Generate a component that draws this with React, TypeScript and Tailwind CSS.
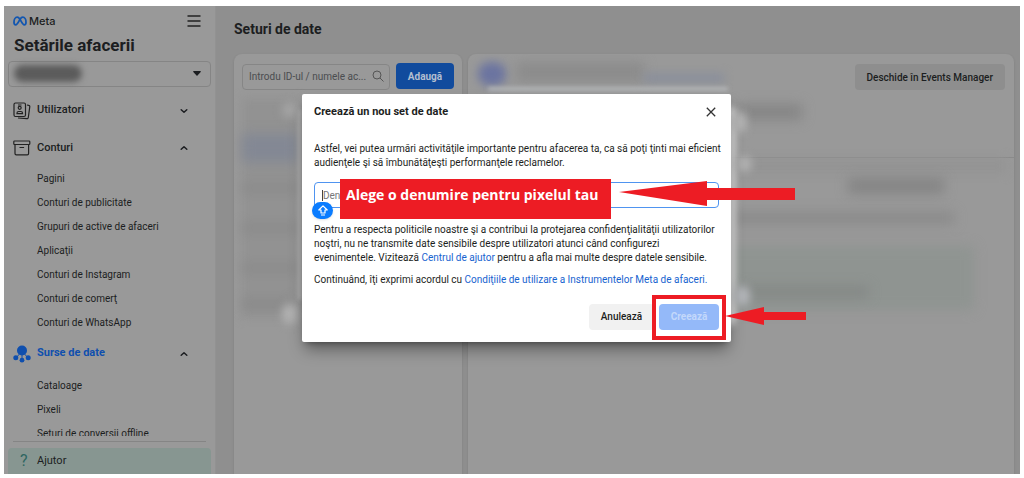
const conturi = [
  "Pagini",
  "Conturi de publicitate",
  "Grupuri de active de afaceri",
  "Aplicaţii",
  "Conturi de Instagram",
  "Conturi de comerţ",
  "Conturi de WhatsApp",
];

const surse = ["Cataloage", "Pixeli", "Seturi de conversii offline"];

function MetaLogo() {
  return (
    <svg
      className="w-[14px] h-[10px]"
      viewBox="0 0 14 10"
      fill="none"
      stroke="#1256b0"
      strokeWidth="1.8"
      strokeLinecap="round"
    >
      <path d="M7 3.200C6 1.900 5.200 1.200 4.200 1.200 2.300 1.200 1 3.800 1 6.300c0 1.500.6 2.500 1.700 2.500C4.300 8.800 5.400 6 7 3.200 8 1.700 8.900 1.200 9.800 1.200c1.900 0 3.200 2.600 3.200 5.100 0 1.500-.6 2.500-1.700 2.500C9.700 8.800 8.600 6 7 3.200z" />
    </svg>
  );
}

function Chevron({ open }: { open?: boolean }) {
  return (
    <svg
      className="w-2 h-2"
      viewBox="0 0 8 8"
      fill="none"
      stroke="#1c1e21"
      strokeWidth="1.5"
      strokeLinecap="round"
      strokeLinejoin="round"
    >
      <path d={open ? "M1.2 5.300 4 2.700 6.800 5.300" : "M1.2 2.700 4 5.300 6.800 2.700"} />
    </svg>
  );
}

function UsersIcon() {
  return (
    <svg className="w-[18px] h-[18px]" viewBox="0 0 18 18" fill="none" stroke="#222" strokeWidth="1.2">
      <rect x="1" y="1" width="11.5" height="13.500" rx="1.5" />
      <circle cx="6.700" cy="5.800" r="1.500" />
      <path d="M4 11.600v-.6c0-.9.700-1.500 1.600-1.500h2.300c.9 0 1.600.6 1.600 1.500v.6z" />
      <path d="M5 3h3.500M14 3l1.800.3c.7.1 1.100.8 1 1.400l-1.500 10.800c-.1.800-.8 1.300-1.500 1.200L5 16" />
    </svg>
  );
}

function AccountsIcon() {
  return (
    <svg className="w-[18px] h-[18px]" viewBox="0 0 18 18" fill="none" stroke="#222" strokeWidth="1.2">
      <rect x="0.800" y="2" width="16" height="3.500" rx="0.800" />
      <path d="M2 5.500v9c0 .8.600 1.300 1.300 1.300h11c.8 0 1.300-.5 1.300-1.300v-9M6.500 8.500h4.600" />
    </svg>
  );
}

function SourcesIcon() {
  return (
    <svg className="w-[18px] h-[18px]" viewBox="0 0 18 18" fill="#0f4fae" stroke="#0f4fae">
      <path d="M9 6 3 13M9 6v9M9 6l6 7" strokeWidth="1" />
      <circle cx="9" cy="5.500" r="5" stroke="none" />
      <circle cx="2.800" cy="12.800" r="2.500" stroke="none" />
      <circle cx="9" cy="15.200" r="2.400" stroke="none" />
      <circle cx="15.200" cy="12.800" r="2.500" stroke="none" />
    </svg>
  );
}

function SubMenu({ items }: { items: string[] }) {
  return (
    <ul>
      {items.map((item) => (
        <li key={item}>
          <a href="#" className="flex items-center h-6 pl-[33px] text-[10px] whitespace-nowrap">
            {item}
          </a>
        </li>
      ))}
    </ul>
  );
}

function Sidebar() {
  return (
    <aside className="w-[212px] shrink-0 flex flex-col bg-[#999999] border-r border-[#929292] text-[#1c1e21]">
      {/* Header */}
      <div className="flex items-center justify-between pl-[9px] pr-[14px] pt-[7px]">
        <div className="flex items-center gap-[2px] h-4">
          <MetaLogo />
          <span className="font-['Inter'] text-[11px] font-medium">Meta</span>
        </div>
        <button aria-label="Meniu">
          <svg className="w-[14px] h-[14px]" viewBox="0 0 14 14" stroke="#222" strokeWidth="1.400">
            <path d="M.5 2h13M.5 7h13M.5 12h13" />
          </svg>
        </button>
      </div>
      <h1 className="pl-[10px] h-6 leading-6 text-[17px] font-bold mt-1">Setările afacerii</h1>

      {/* Account picker */}
      <div className="relative mx-1 mt-1">
        <select
          aria-label="Cont de afaceri"
          className="appearance-none block w-full h-[26px] rounded border border-[#858585] bg-transparent"
        ></select>
        <span className="absolute left-[6px] top-1 w-[68px] h-[17px] rounded-full bg-[#5b5b5b] blur-[3px]" />
        <svg className="absolute right-[10px] top-[10px] w-2 h-[5px]" viewBox="0 0 8 5" fill="#1c1e21">
          <path d="M.8 0h6.400c.6 0 .9.600.5 1L4.500 4.500a.7.7 0 0 1-1 0L.3 1C-.1.600.200 0 .8 0z" />
        </svg>
      </div>

      {/* Navigation */}
      <nav className="flex-1 min-h-0 overflow-hidden pt-1">
        <button className="flex items-center w-full h-[39px] pl-[9px] pr-[27px] text-[11px]">
          <UsersIcon />
          <span className="flex-1 pl-[6px] text-left font-medium">Utilizatori</span>
          <Chevron />
        </button>
        <button className="flex items-center w-full h-9 pl-[9px] pr-[27px] text-[11px]">
          <AccountsIcon />
          <span className="flex-1 pl-[6px] text-left font-medium">Conturi</span>
          <Chevron open />
        </button>
        <SubMenu items={conturi} />
        <button className="flex items-center w-full h-[39px] pl-[9px] pr-[27px] text-[11px] font-bold text-[#0f4fae]">
          <SourcesIcon />
          <span className="flex-1 pl-[6px] text-left">Surse de date</span>
          <Chevron open />
        </button>
        <SubMenu items={surse} />
      </nav>

      {/* Help */}
      <div className="mx-[9px] mt-[5px] mb-[6px] border-t border-[#858585]" />
      <a href="#" className="flex items-center h-[26px] mx-1 pl-3 rounded-t bg-[#879691] text-[11px]">
        <span className="w-[17px] text-base text-[#2f6661]">?</span>
        Ajutor
      </a>
    </aside>
  );
}

function SetList() {
  return (
    <section className="relative w-[228px] shrink-0 rounded-t-lg bg-[#999999] shadow overflow-hidden p-2 pt-[9px]">
      <div className="flex gap-[6px] h-[26px]">
        <div className="relative flex-1">
          <input
            type="text"
            aria-label="Caută"
            placeholder="Introdu ID-ul / numele ac..."
            className="w-full h-full rounded border border-[#868686] bg-transparent pl-[6px] pr-5 text-[10px] placeholder:text-[#4b4d50]"
          />
          <svg className="absolute right-[6px] top-[7px] w-3 h-3" viewBox="0 0 12 12" fill="none" stroke="#555" strokeWidth="1">
            <circle cx="5" cy="5" r="4" />
            <path d="m8 8 3.500 3.500" />
          </svg>
        </div>
        <button className="w-[58px] rounded bg-[#114b9d] text-[10px] font-bold text-[#b3bfd0]">Adaugă</button>
      </div>

      {/* hidden rows of the list */}
      <div className="absolute left-2 top-11 w-14 h-[220px] bg-[#929292] blur-[5px]" />
      <div className="absolute left-2 top-20 w-14 h-7 bg-[#838894] blur-[6px]" />
      <div className="absolute left-2 top-[128px] w-14 h-3 bg-[#8d8d8d] blur-[5px]" />
      <div className="absolute left-2 top-[168px] w-14 h-3 bg-[#8d8d8d] blur-[5px]" />
      <div className="absolute left-2 top-[208px] w-14 h-3 bg-[#8d8d8d] blur-[5px]" />
      <div className="absolute left-2 top-[244px] w-12 h-3 bg-[#8c8c8c] blur-[5px]" />
      <div className="absolute left-16 top-14 w-1 h-[190px] bg-[#b4b4b4] blur-[2px]" />
      <div className="absolute left-12 top-[250px] w-4 h-5 rounded-full bg-[#b2b2b2] blur-[4px]" />
      <div className="absolute left-12 top-12 w-4 h-4 rounded-full bg-[#a4a4a4] blur-[4px]" />
    </section>
  );
}

function SetDetails() {
  return (
    <section className="relative flex-1 rounded-t-lg bg-[#999999] shadow overflow-hidden">
      <div className="flex justify-end h-[104px] border-b border-[#8a8a8a] pt-[10px] pr-[9px]">
        <button className="h-[26px] px-3 rounded bg-[#8e8e8e] text-[10px] font-medium text-[#1c1e21]">
          Deschide în Events Manager
        </button>
      </div>

      {/* hidden details of the data set */}
      <div className="absolute left-[10px] top-2 w-7 h-6 rounded-full bg-[#6b74a0] blur-[5px]" />
      <div className="absolute left-12 top-2 w-32 h-5 bg-[#8c8c8c] blur-[6px]" />
      <div className="absolute left-44 top-5 w-20 h-2 bg-[#878d9c] blur-[5px]" />
      <div className="absolute left-5 top-[33px] w-60 h-1 bg-[#b4b6b8] blur-[2px]" />
      <div className="absolute left-[270px] top-[50px] w-16 h-4 bg-[#868686] blur-[6px]" />
      <div className="absolute left-[262px] top-[104px] right-2 h-4 bg-[#949494] blur-[5px]" />
      <div className="absolute left-[380px] top-[124px] w-24 h-4 bg-[#858585] blur-[6px]" />
      <div className="absolute left-[262px] top-[158px] w-56 h-3 bg-[#8a8a8a] blur-[6px]" />
      <div className="absolute left-[232px] top-[192px] right-10 h-16 rounded bg-[#8f9491] blur-[6px]" />
      <div className="absolute left-[272px] top-[232px] w-32 h-3 bg-[#848886] blur-[6px]" />
      <div className="absolute left-[252px] top-[52px] w-4 h-[220px] rounded-full bg-[#d8d8d8] blur-[3px]" />
      <div className="absolute left-[266px] top-[58px] w-3 h-5 rounded-full bg-[#b8b8b8] blur-[4px]" />
      <div className="absolute left-[268px] top-[102px] w-4 h-4 rounded-full bg-[#b2b2b2] blur-[4px]" />
      <div className="absolute left-[266px] top-[232px] w-4 h-5 rounded-full bg-[#b4b6ba] blur-[4px]" />
    </section>
  );
}

function CreateDialog() {
  return (
    <div
      role="dialog"
      aria-labelledby="dialog-title"
      className="relative w-[429px] h-max rounded-xs bg-white px-3 pt-2 pb-3 shadow-lg shadow-black/40 text-[10px] leading-[14px] text-[#1c1e21]"
    >
      <div className="flex items-center justify-between h-5 pr-[3px]">
        <h3 id="dialog-title" className="text-[11px] font-bold">
          Creează un nou set de date
        </h3>
        <button aria-label="Închide">
          <svg className="w-[10px] h-[10px]" viewBox="0 0 10 10" stroke="#333" strokeWidth="1.300">
            <path d="m.8.8 8.400 8.400M9.200.8.8 9.200" />
          </svg>
        </button>
      </div>

      <p className="mt-5 -mr-2">
        Astfel, vei putea urmări activităţile importante pentru afacerea ta, ca să poţi ţinti mai eficient audienţele şi
        să îmbunătăţeşti performanţele reclamelor.
      </p>

      <div className="relative mt-3 h-[26px]">
        <input
          type="text"
          aria-label="Denumire"
          placeholder="Denumire"
          className="w-full h-full rounded border border-[#4f94f0] pl-2 text-[10px] placeholder:text-[#777]"
        />
        <span className="absolute left-2 top-2 w-px h-[11px] bg-[#444]" />
        <span className="absolute -left-[2px] top-5 flex items-center justify-center w-[21px] h-[17px] rounded-full bg-[#0a7cff] shadow">
          <svg className="w-[10px] h-[11px]" viewBox="0 0 10 11" fill="none" stroke="white" strokeWidth="1.200" strokeLinejoin="round">
            <path d="M5 .8 9.200 5H7v3H3V5H.8zM3 10h4" />
          </svg>
        </span>
        {/* Instruction over the name field */}
        <div className="absolute left-[26px] -top-[3px] w-[271px] h-10 px-[6px] pt-[6px] bg-[#ed1c24] font-['Open_Sans'] text-sm leading-5 font-bold text-white whitespace-nowrap">
          Alege o denumire pentru pixelul tau
        </div>
        <svg className="absolute left-[305px] -top-[1px] w-[177px] h-[25px]" viewBox="0 0 177 25" fill="#ed1c24">
          <path d="M0 11 88 0v7h88v12H88v6z" />
        </svg>
      </div>

      <p className="mt-[15px]">
        Pentru a respecta politicile noastre şi a contribui la protejarea confidenţialităţii utilizatorilor noştri, nu
        ne transmite date sensibile despre utilizatori atunci când configurezi evenimentele. Vizitează{" "}
        <a href="#" className="text-[#1763cf]">
          Centrul de ajutor
        </a>{" "}
        pentru a afla mai multe despre datele sensibile.
      </p>
      <p className="mt-2">
        Continuând, îţi exprimi acordul cu{" "}
        <a href="#" className="text-[#1763cf]">
          Condiţiile de utilizare a Instrumentelor Meta de afaceri.
        </a>
      </p>

      <div className="flex justify-end gap-[5px] mt-[17px]">
        <button className="w-[65px] h-[26px] rounded bg-[#f1f1f1] font-medium">Anulează</button>
        <div className="relative">
          <button className="w-[60px] h-[26px] rounded bg-[#94b9f9] font-bold text-[#c3d8fb]">Creează</button>
          <div className="absolute -left-[7px] -top-[9px] w-[74px] h-[45px] border-4 border-[#ed1c24]" />
          <svg className="absolute left-[66px] top-[3px] w-[81px] h-[18px]" viewBox="0 0 81 18" fill="#ed1c24">
            <path d="M0 9 39 0v5h42v8H39v5z" />
          </svg>
        </div>
      </div>
    </div>
  );
}

export default function App() {
  return (
    <div className="h-screen bg-white px-1 pt-[6px] pb-1 font-['Roboto',sans-serif]">
      <div className="relative flex h-full overflow-hidden bg-[#8f8f8f]">
        <Sidebar />
        <main className="flex-1 min-w-0 flex flex-col pl-[18px] pr-[6px]">
          <h2 className="h-12 pt-[11px] text-sm leading-6 font-bold text-[#1c1e21]">Seturi de date</h2>
          <div className="flex-1 min-h-0 flex gap-[6px]">
            <SetList />
            <SetDetails />
          </div>
        </main>

        <div className="absolute inset-0 flex items-start justify-center pl-[9px] pt-[88px]">
          <CreateDialog />
        </div>
      </div>
    </div>
  );
}
